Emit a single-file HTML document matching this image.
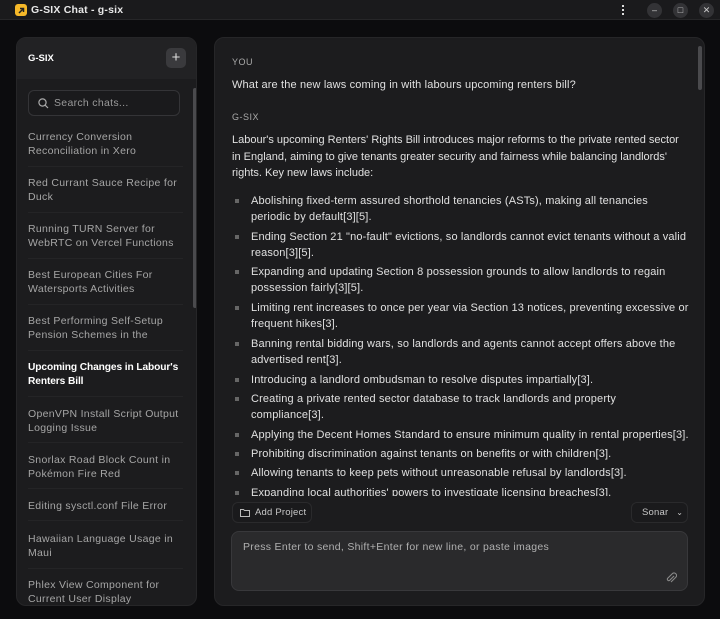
<!DOCTYPE html>
<html><head><meta charset="utf-8"><style>
*{box-sizing:border-box;margin:0;padding:0}
body{width:720px;height:619px;background:#0c0c0e;font-family:"Liberation Sans",sans-serif;color:#d8d8d8;overflow:hidden;position:relative}
.tb{position:absolute;left:0;top:0;width:720px;height:20px;background:#1a1a1c;border-bottom:1px solid #262628}
.logo{position:absolute;left:15px;top:4px;width:12px;height:12px;background:#f5b829;border-radius:3px}
.tt{position:absolute;left:31px;top:4px;font-size:10.5px;font-weight:bold;color:#e8e8e8;letter-spacing:.2px}
.wb{position:absolute;top:3px;width:15px;height:15px;border-radius:50%;background:#333336;color:#ccc;font-size:9px;text-align:center;line-height:15px}
.side{position:absolute;left:16px;top:37px;width:181px;height:569px;background:#1c1c1e;border-radius:10px;overflow:hidden;border:1px solid #262628}
.sh{height:41px;background:#222224;position:relative}
.sh b{position:absolute;left:11px;top:15px;font-size:9.5px;color:#fff}
.plus{position:absolute;left:149px;top:10px;width:20px;height:20px;border-radius:5px;background:#3a3a3d;color:#ddd;text-align:center;line-height:19px;font-size:15px}
.search{position:absolute;left:11px;top:52px;width:152px;height:26px;border:1px solid #343437;border-radius:6px;background:#1a1a1c;font-size:10.5px;color:#9a9a9a;padding:6px 0 0 25px;letter-spacing:.3px}
.search svg{position:absolute;left:9px;top:7px}
.item{position:absolute;left:11px;width:160px;font-size:10.5px;line-height:14px;color:#a6a6a6;letter-spacing:.3px;white-space:nowrap}
.sep{position:absolute;left:11px;width:155px;height:1px;background:#242426}
.sb{position:absolute;left:176px;top:50px;width:4px;height:220px;background:#4a4a4d;border-radius:2px}
.main{position:absolute;left:214px;top:37px;width:491px;height:569px;background:#1c1c1e;border-radius:10px;border:1px solid #262628}
.c{position:absolute;left:17px;font-size:11px;line-height:16.5px;color:#e0e0e0;letter-spacing:.15px;white-space:nowrap}
.lbl{font-size:9px;color:#aaa;letter-spacing:.5px}
ul{list-style:none}
li{position:absolute;left:36px;width:440px;font-size:11px;line-height:16px;color:#e0e0e0;letter-spacing:.15px;white-space:nowrap}
li:before{content:"";position:absolute;left:-16px;top:6px;width:4px;height:4px;background:#666}
.msb{position:absolute;left:483px;top:8px;width:4px;height:44px;background:#4a4a4d;border-radius:2px}
.btn{position:absolute;top:464px;height:21px;border:1px solid #2a2a2c;border-radius:6px;background:#1a1a1c;font-size:9.5px;color:#c8c8c8;line-height:19px;letter-spacing:.2px}
.inp{position:absolute;left:16px;top:493px;width:457px;height:60px;background:#2a2a2c;border:1px solid #38383b;border-radius:8px;font-size:10.5px;color:#b0b0b0;padding:9px 11px;letter-spacing:.3px}
</style></head><body>
<div class="tb"><div class="logo"><svg width="12" height="12"><path d="M4 8L8.5 3.5M5 3.5H8.5V7" stroke="#222" stroke-width="1.5" fill="none"/></svg></div><div class="tt">G-SIX Chat - g-six</div>
<div style="position:absolute;left:622px;top:5px;width:3px"><div style="width:2px;height:2px;background:#ddd;margin-bottom:2px"></div><div style="width:2px;height:2px;background:#ddd;margin-bottom:2px"></div><div style="width:2px;height:2px;background:#ddd"></div></div>
<div class="wb" style="left:647px">–</div><div class="wb" style="left:673px">□</div><div class="wb" style="left:699px">✕</div></div>
<div class="side"><div class="sh"><b>G-SIX</b><div class="plus">+</div></div>
<div class="search"><svg width="11" height="11"><circle cx="4.5" cy="4.5" r="3.6" stroke="#aaa" stroke-width="1.2" fill="none"/><path d="M7.3 7.3L10 10" stroke="#aaa" stroke-width="1.2"/></svg>Search chats...</div>
<div class="sb"></div>
<div class="item" style="top:92px">Currency Conversion<br>Reconciliation in Xero</div><div class="sep" style="top:128px"></div>
<div class="item" style="top:138px">Red Currant Sauce Recipe for<br>Duck</div><div class="sep" style="top:174px"></div>
<div class="item" style="top:184px">Running TURN Server for<br>WebRTC on Vercel Functions</div><div class="sep" style="top:220px"></div>
<div class="item" style="top:230px">Best European Cities For<br>Watersports Activities</div><div class="sep" style="top:266px"></div>
<div class="item" style="top:276px">Best Performing Self-Setup<br>Pension Schemes in the</div><div class="sep" style="top:312px"></div>
<div class="item" style="top:323px;color:#fff;font-weight:bold;letter-spacing:-.1px;font-size:10.2px">Upcoming Changes in Labour's<br>Renters Bill</div><div class="sep" style="top:358px"></div>
<div class="item" style="top:369px">OpenVPN Install Script Output<br>Logging Issue</div><div class="sep" style="top:404px"></div>
<div class="item" style="top:415px">Snorlax Road Block Count in<br>Pokémon Fire Red</div><div class="sep" style="top:450px"></div>
<div class="item" style="top:461px">Editing sysctl.conf File Error</div><div class="sep" style="top:482px"></div>
<div class="item" style="top:494px">Hawaiian Language Usage in<br>Maui</div><div class="sep" style="top:530px"></div>
<div class="item" style="top:540px">Phlex View Component for<br>Current User Display</div>
</div>
<div class="main">
<div class="msb"></div>
<div class="c lbl" style="top:16px">YOU</div>
<div class="c" style="top:39px">What are the new laws coming in with labours upcoming renters bill?</div>
<div class="c lbl" style="top:71px">G-SIX</div>
<div class="c" style="top:94px;letter-spacing:0">Labour's upcoming Renters' Rights Bill introduces major reforms to the private rented sector<br>in England, aiming to give tenants greater security and fairness while balancing landlords'<br>rights. Key new laws include:</div>
<div style="position:absolute;left:0;top:0;width:480px;height:458px;overflow:hidden"><ul>
<li style="top:155px">Abolishing fixed-term assured shorthold tenancies (ASTs), making all tenancies<br>periodic by default[3][5].</li>
<li style="top:191px">Ending Section 21 "no-fault" evictions, so landlords cannot evict tenants without a valid<br>reason[3][5].</li>
<li style="top:226px">Expanding and updating Section 8 possession grounds to allow landlords to regain<br>possession fairly[3][5].</li>
<li style="top:262px">Limiting rent increases to once per year via Section 13 notices, preventing excessive or<br>frequent hikes[3].</li>
<li style="top:298px">Banning rental bidding wars, so landlords and agents cannot accept offers above the<br>advertised rent[3].</li>
<li style="top:334px">Introducing a landlord ombudsman to resolve disputes impartially[3].</li>
<li style="top:353px">Creating a private rented sector database to track landlords and property<br>compliance[3].</li>
<li style="top:389px">Applying the Decent Homes Standard to ensure minimum quality in rental properties[3].</li>
<li style="top:408px">Prohibiting discrimination against tenants on benefits or with children[3].</li>
<li style="top:427px">Allowing tenants to keep pets without unreasonable refusal by landlords[3].</li>
<li style="top:447px">Expanding local authorities' powers to investigate licensing breaches[3].</li>
</ul></div>
<div class="btn" style="left:17px;width:80px;padding-left:22px"><svg style="position:absolute;left:7px;top:5px" width="10" height="9"><path d="M.5 1.5h3l1 1h5v6h-9z" stroke="#bbb" fill="none"/></svg>Add Project</div>
<div class="btn" style="left:416px;width:57px;padding-left:10px">Sonar <span style="font-size:8px;margin-left:5px">⌄</span></div>
<div class="inp">Press Enter to send, Shift+Enter for new line, or paste images
<svg style="position:absolute;right:10px;bottom:6px" width="12" height="12"><path d="M9 4L4.5 8.5a1.5 1.5 0 01-2-2L7.5 1.5a2.5 2.5 0 013.5 3.5L6 10" stroke="#888" stroke-width="1.1" fill="none"/></svg></div>
</div>
</body></html>
